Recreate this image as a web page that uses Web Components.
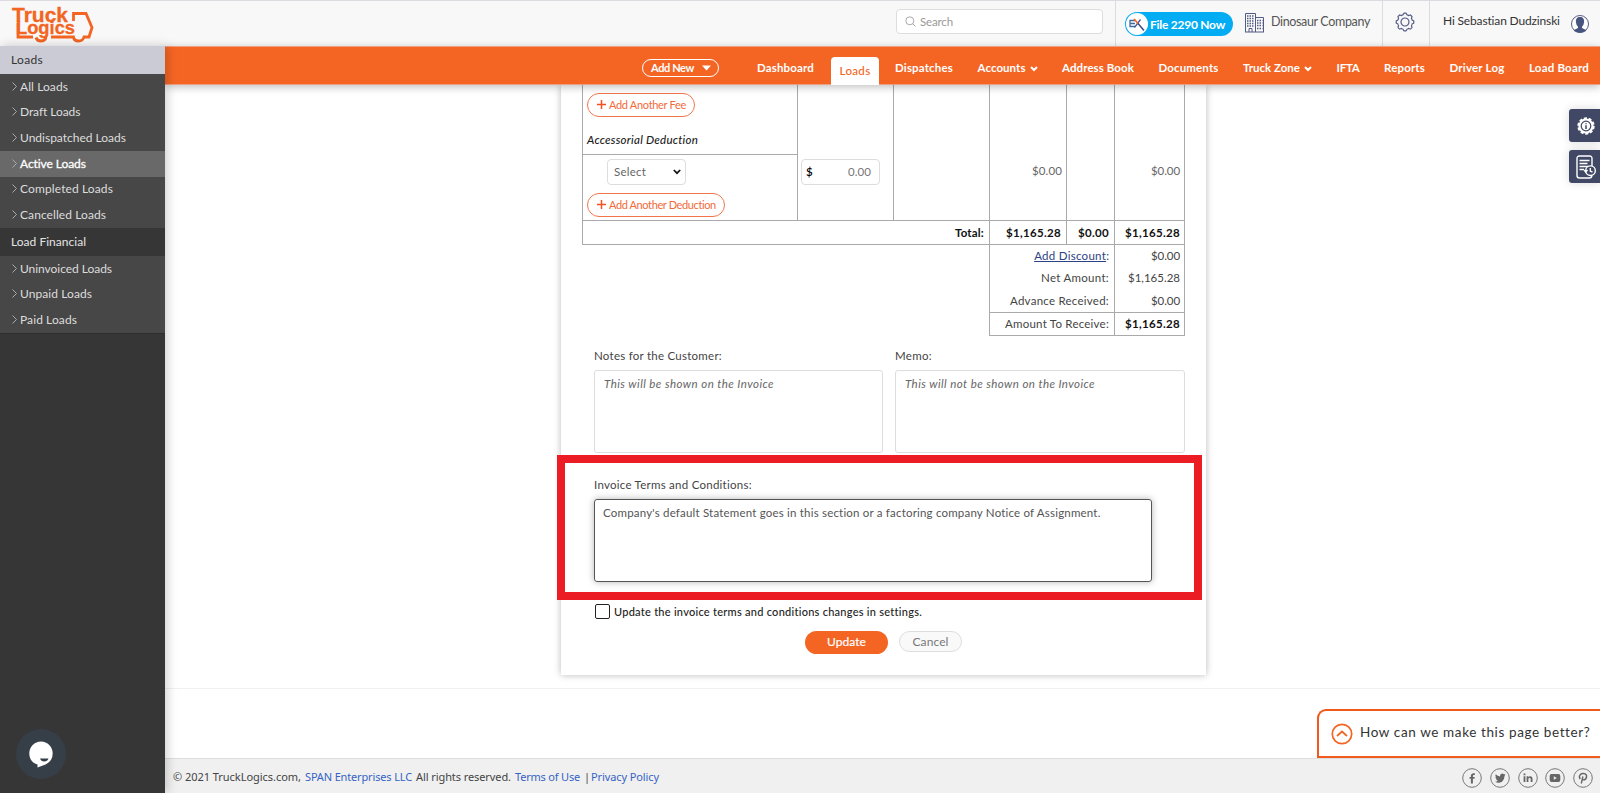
<!DOCTYPE html>
<html lang="en">
<head>
<meta charset="utf-8">
<title>TruckLogics - Invoice</title>
<style>
  body {
    margin: 0;
    font-family: Lato, "Liberation Sans", sans-serif;
    font-size: 12px;
    color: #444;
    background: #fff;
  }
</style>
</head>
<body>
<tl-app></tl-app>

<template id="tl-text">
  <style>
    :host { display: inline-block; white-space: nowrap; }
  </style>
  <slot></slot>
</template>

<template id="tl-app">
  <style>
    :host {
      display: grid;
      grid-template-columns: 165px 1fr;
      grid-template-rows: 46px 747px;
      width: 1600px;
      height: 793px;
      position: relative;
      overflow: hidden;
    }
    tl-header { grid-column: 1 / 3; }
    main {
      display: flex;
      flex-direction: column;
      min-width: 0;
    }
    .content {
      height: 603px;
      display: flex;
      padding-left: 396px;
      border-bottom: 1px solid #f0f0f0;
    }
    .spacer { height: 69px; }
    .side-tools {
      position: absolute;
      right: 0;
      top: 109px;
      display: flex;
      flex-direction: column;
      gap: 8px;
    }
    tl-feedback { position: absolute; right: 0; top: 709px; }
    tl-chat { position: absolute; left: 16px; top: 729px; z-index: 4; }
    .highlight {
      position: absolute;
      left: 557px;
      top: 455px;
      width: 629px;
      height: 129px;
      border: 8px solid #ec1c24;
    }
  </style>
  <tl-header></tl-header>
  <tl-sidebar></tl-sidebar>
  <main>
    <tl-nav></tl-nav>
    <div class="content"><tl-invoice></tl-invoice></div>
    <div class="spacer"></div>
    <tl-footer></tl-footer>
  </main>
  <div class="side-tools">
    <tl-tool>
      <svg width="20" height="20" viewBox="0 0 20 20">
        <circle cx="10" cy="10" r="7.6" fill="#fff"/>
        <circle cx="10" cy="10" r="7.7" fill="none" stroke="#fff" stroke-width="2" stroke-dasharray="3.1 1.74"/>
        <circle cx="10" cy="10" r="4.8" fill="none" stroke="#404865" stroke-width="1.2"/>
        <path d="M10 9.2V13M10 7.2V8.2" stroke="#404865" stroke-width="1.5"/>
      </svg>
    </tl-tool>
    <tl-tool>
      <svg width="20" height="24" viewBox="0 0 20 24" fill="none" stroke="#fff" stroke-width="1.4">
        <path d="M16 11V3.500Q16 1 13.500 1H3.500Q1 1 1 3.500V20.500Q1 23 3.500 23H13.500Q15.500 23 16 20.500"/>
        <path d="M3.500 5.500H13.500M3.500 8.500H11.500M3.500 11.500H13M3.500 14.500H8"/>
        <circle cx="14.500" cy="15.700" r="4.800" fill="#404865"/>
        <path d="M14.300 13V16L16.500 17.200M8.200 15L9.700 17L11.500 15"/>
      </svg>
    </tl-tool>
  </div>
  <div class="highlight"></div>
  <tl-feedback></tl-feedback>
  <tl-chat></tl-chat>
</template>

<template id="tl-header">
  <style>
    :host {
      display: flex;
      box-sizing: border-box;
      height: 46px;
      border-top: 1px solid #dcdce0;
      background: #f8f8f8;
    }
    .logo { margin: 2px 0 0 10px; width: 86px; flex: none; }
    .search {
      box-sizing: border-box;
      width: 207px;
      height: 25px;
      margin: 8px 12px 0 auto;
      padding-left: 8px;
      display: flex;
      align-items: center;
      gap: 4px;
      background: #fff;
      border: 1px solid #ddd;
      border-radius: 4px;
      color: #999;
      font-size: 11.5px;
    }
    .cell { box-sizing: border-box; border-left: 1px solid #dcdce0; display: flex; }
    .company { width: 267px; padding-left: 9px; }
    .pill {
      box-sizing: border-box;
      width: 108px;
      height: 24px;
      margin-top: 11px;
      display: flex;
      align-items: center;
      gap: 2px;
      padding-left: 1px;
      border-radius: 12px;
      background: #04adf3;
      color: #fff;
      font-weight: bold;
    }
    .building { margin: 11px 7px 0 12px; }
    .name { font-size: 12.5px; line-height: 42px; color: #555; }
    .gear { width: 47px; justify-content: center; padding: 11px 3px 0 0; }
    .user { width: 171px; padding-left: 13px; line-height: 40px; color: #333; }
    .avatar { margin: 13px 0 0 10px; }
  </style>
  <svg class="logo" width="86" height="42" viewBox="0 0 86 42">
    <text fill="#f26522" stroke="#f26522" stroke-width=".3" font-family="Liberation Sans" font-weight="bold">
      <tspan x="2" y="18.500" font-size="20" textLength="56" lengthAdjust="spacingAndGlyphs">Truck</tspan>
      <tspan x="6" y="30.500" font-size="18.500" textLength="59" lengthAdjust="spacingAndGlyphs">Logics</tspan>
    </text>
    <path fill="none" stroke="#f26522" stroke-width="2.800" d="M8 20V34H23M63.500 18V10.500H76L82 24.500L79 34H74Q73 38 68.500 38Q64 38 63.500 34H41M26 34.500Q27 38 31 38Q36 38 36 33"/>
  </svg>
  <div class="search">
    <svg width="11" height="11" viewBox="0 0 11 11" fill="none" stroke="#aaa"><circle cx="4.800" cy="4.800" r="4"/><path d="M7.700 7.700L10.500 10.500"/></svg>
    <tl-text w="33">Search</tl-text>
  </div>
  <div class="cell company">
    <div class="pill">
      <svg width="22" height="22" viewBox="0 0 22 22">
        <circle cx="11" cy="11" r="11" fill="#fff"/>
        <path d="M9 7.500H4V13.500H9M4 10.500H9" fill="none" stroke="#3c6aa0" stroke-width="1.300"/>
        <path d="M14.500 6.500L8.500 14.500" stroke="#3c5a9a" stroke-width="1.300"/>
        <path d="M8 6L12.500 11" stroke="#f26522" stroke-width="1.700"/>
        <path d="M12 10.500L18 17.500" stroke="#3c4a80" stroke-width="1.500"/>
      </svg>
      <tl-text w="75">File 2290 Now</tl-text>
    </div>
    <svg class="building" width="19" height="21" viewBox="0 0 19 21" fill="none" stroke="#535b84">
      <path d="M.5 20V1.500H10.500V20M10.500 5.500H18.500V20M0 20H19M4 20V16.500H7V20"/>
      <path stroke-width="1.500" stroke-dasharray="1.500 1" d="M2 4H9.500M2 6.500H9.500M2 9H9.500M2 11.500H9.500M2 14H9.500M12 8.500H17.500M12 11H17.500M12 13.500H17.500M12 16.500H17.500"/>
    </svg>
    <tl-text class="name" w="99">Dinosaur Company</tl-text>
  </div>
  <div class="cell gear">
    <svg width="20" height="20" viewBox="-10 -10 20 20" fill="none" stroke="#535b84" stroke-width="1.200">
      <path id="cog"/>
      <circle r="4"/>
    </svg>
  </div>
  <div class="cell user">
    <tl-text w="117">Hi Sebastian Dudzinski</tl-text>
    <svg class="avatar" width="20" height="20" viewBox="0 0 20 20">
      <circle cx="10" cy="10" r="8.500" fill="#fff" stroke="#535b84"/>
      <path fill="#47547f" d="M10 3C13 3 14.500 5 14 8.500Q13.700 11.500 12 12.800V14L15.500 15.700Q17 16.500 15.500 17.300Q10 20 4.500 17.300Q3 16.500 4.500 15.700L8 14V12.800Q6.300 11.500 6 8.500C5.500 5 7 3 10 3Z"/>
    </svg>
  </div>
</template>

<template id="tl-sidebar">
  <style>
    :host {
      display: block;
      position: relative;
      z-index: 3;
      background: #363636;
      box-shadow: 2px 0 10px rgba(0, 0, 0, 0.2);
    }
    h3 {
      box-sizing: border-box;
      height: 28px;
      margin: 0;
      padding-left: 11px;
      line-height: 28px;
      font-size: 12px;
      font-weight: normal;
      color: #e4e4e4;
    }
    h3.current { background: #cbcbd6; color: #333; }
    .group { background: #474747; }
    .group:last-child { border-bottom: 1px solid #2e2e2e; }
  </style>
  <h3 class="current"><tl-text w="32">Loads</tl-text></h3>
  <div class="group">
    <tl-side-item w="48">All Loads</tl-side-item>
    <tl-side-item w="60">Draft Loads</tl-side-item>
    <tl-side-item w="106">Undispatched Loads</tl-side-item>
    <tl-side-item w="66" active>Active Loads</tl-side-item>
    <tl-side-item w="93">Completed Loads</tl-side-item>
    <tl-side-item w="86">Cancelled Loads</tl-side-item>
  </div>
  <h3><tl-text w="75">Load Financial</tl-text></h3>
  <div class="group">
    <tl-side-item w="92">Uninvoiced Loads</tl-side-item>
    <tl-side-item w="72">Unpaid Loads</tl-side-item>
    <tl-side-item w="57">Paid Loads</tl-side-item>
  </div>
</template>

<template id="tl-side-item">
  <style>
    :host {
      display: flex;
      align-items: center;
      box-sizing: border-box;
      height: 25.67px;
      gap: 3px;
      padding: 0 0 1px 12px;
      color: #ddd;
    }
    :host([active]) { background: #696969; color: #fff; -webkit-text-stroke: 0.3px; }
  </style>
  <svg width="5" height="9" viewBox="0 0 5 9" fill="none" stroke="#aaa"><path d="M.5 .5L4.500 4.500L.5 8.500"/></svg>
  <tl-text><slot></slot></tl-text>
</template>

<template id="tl-nav">
  <style>
    :host {
      display: flex;
      align-items: center;
      box-sizing: border-box;
      height: 39px;
      flex: none;
      position: relative;
      z-index: 2;
      padding-right: 11px;
      justify-content: flex-end;
      background: #f46524;
      border-top: 1px solid #ee9f84;
      border-bottom: 1px solid #ee9f84;
      box-shadow: 0 2px 8px rgba(0, 0, 0, 0.25);
      color: #fff;
      font-size: 11.5px;
      font-weight: bold;
      line-height: 37px;
    }
    .add {
      box-sizing: border-box;
      width: 77px;
      height: 18px;
      margin: 5px 38px 0 0;
      display: flex;
      align-items: center;
      gap: 8px;
      padding-left: 8px;
      border: 1px solid #fff;
      border-radius: 9px;
      font-size: 11px;
      line-height: 16px;
    }
    .item { margin: 4px 0 0 24.5px; white-space: nowrap; }
    .add + .item { margin-left: 0; }
    .item svg { vertical-align: 0; margin-left: 4px; }
    .tab {
      align-self: flex-end;
      height: 28px;
      width: 48px;
      margin: 0 -8.500px -1px 17px;
      line-height: 27px;
      text-align: center;
      background: #fff;
      border-radius: 4px 4px 0 0;
      color: #f26522;
      font-weight: 500;
    }
  </style>
  <div class="add"><tl-text w="43">Add New</tl-text><svg width="9" height="6" viewBox="0 0 9 6"><path d="M0 .5H9L4.500 5.500Z" fill="#fff"/></svg></div>
  <div class="item"><tl-text w="57">Dashboard</tl-text></div>
  <div class="tab"><tl-text w="31">Loads</tl-text></div>
  <div class="item"><tl-text w="58">Dispatches</tl-text></div>
  <div class="item"><tl-text w="48">Accounts</tl-text><svg width="8" height="6" viewBox="0 0 8 6" fill="none" stroke="#fff" stroke-width="2"><path d="M1 1L4 4L7 1"/></svg></div>
  <div class="item"><tl-text w="72">Address Book</tl-text></div>
  <div class="item"><tl-text w="60">Documents</tl-text></div>
  <div class="item"><tl-text w="57">Truck Zone</tl-text><svg width="8" height="6" viewBox="0 0 8 6" fill="none" stroke="#fff" stroke-width="2"><path d="M1 1L4 4L7 1"/></svg></div>
  <div class="item"><tl-text w="23">IFTA</tl-text></div>
  <div class="item"><tl-text w="41">Reports</tl-text></div>
  <div class="item"><tl-text w="55">Driver Log</tl-text></div>
  <div class="item"><tl-text w="60">Load Board</tl-text></div>
</template>

<template id="tl-invoice">
  <style>
    :host {
      display: block;
      box-sizing: border-box;
      width: 645px;
      height: 590px;
      padding-left: 21px;
      background: #fff;
      box-shadow: 0 0 7px rgba(0, 0, 0, 0.28);
      font-size: 11.5px;
    }
    .charges {
      display: grid;
      grid-template-columns: 215px 96px 96px 77px 48px 71px;
      height: 135px;
      width: 603px;
      border-bottom: 1px solid #aaa;
    }
    .charges > div { box-sizing: border-box; border-left: 1px solid #aaa; }
    .charges > .last { border-right: 1px solid #aaa; }
    .fees { padding: 8px 0 0 4px; }
    .subtitle {
      height: 37px;
      margin-left: -4px;
      padding-left: 4px;
      line-height: 45px;
      font-style: italic;
      font-weight: 500;
      color: #222;
      border-bottom: 1px solid #aaa;
    }
    .box {
      box-sizing: border-box;
      height: 26px;
      border: 1px solid #ddd;
      border-radius: 4px;
      display: flex;
      align-items: center;
      justify-content: space-between;
    }
    .select { width: 79px; margin: 4px 0 8px 20px; padding: 0 4px 1px 6px; color: #666; }
    .amount { width: 79px; margin: 74px 0 0 3px; padding: 0 8px 1px 4px; color: #777; }
    .amount b { color: #000; font-weight: 600; }
    .num { padding: 79px 4px 0 0; text-align: right; color: #666; }
    .totals {
      display: grid;
      grid-template-columns: 407px 77px 48px 71px;
      width: 603px;
      height: 23px;
      border-bottom: 1px solid #aaa;
      text-align: right;
      line-height: 23px;
      font-weight: bold;
      color: #111;
    }
    .totals > div { box-sizing: border-box; border-left: 1px solid #aaa; padding-right: 5px; }
    .totals > .last, .summary > div:nth-child(even) { border-right: 1px solid #aaa; }
    .summary {
      display: grid;
      grid-template-columns: 125px 71px;
      grid-template-rows: 22px 23px 22px 23px;
      width: 196px;
      margin-left: 407px;
      border-bottom: 1px solid #aaa;
      text-align: right;
      line-height: 22px;
    }
    .summary > div { box-sizing: border-box; border-left: 1px solid #aaa; padding-right: 5px; }
    .summary > .due { border-top: 1px solid #aaa; }
    .summary > .due:last-child { font-weight: bold; color: #111; }
    .totals > .last, .summary > div:nth-child(even) { padding-right: 4px; }
    .summary .link { color: #2d4284; line-height: 13px; text-decoration: underline; }
    .notes { display: flex; gap: 12px; margin: 12px 0 0 12px; }
    .terms { margin: 24px 0 0 12px; }
    .confirm {
      display: flex;
      align-items: center;
      gap: 4px;
      height: 15px;
      margin: 22px 0 0 13px;
      font-size: 11px;
      font-weight: 500;
      color: #222;
    }
    .check { box-sizing: border-box; width: 15px; height: 15px; border: 1.5px solid #222; border-radius: 2px; background: #fff; }
    .actions { display: flex; gap: 11px; margin: 12px 0 0 223px; font-size: 12px; }
    .btn { box-sizing: border-box; text-align: center; border-radius: 12px; }
    .update { width: 83px; height: 23px; line-height: 22px; background: #f46524; color: #fff; -webkit-text-stroke: 0.2px; }
    .cancel { width: 63px; height: 21px; line-height: 19px; background: #f9f9f9; border: 1px solid #ddd; color: #777; }
  </style>
  <div class="charges">
    <div class="fees">
      <tl-add w="108" text="77">Add Another Fee</tl-add>
      <div class="subtitle"><tl-text w="111">Accessorial Deduction</tl-text></div>
      <div class="box select"><tl-text w="32">Select</tl-text><svg width="8" height="6" viewBox="0 0 8 6" fill="none" stroke="#111" stroke-width="1.700"><path d="M.8 1L4 4.200L7.200 1"/></svg></div>
      <tl-add w="138" text="107">Add Another Deduction</tl-add>
    </div>
    <div><div class="box amount"><b>$</b><tl-text w="23">0.00</tl-text></div></div>
    <div></div>
    <div class="num"><tl-text w="30">$0.00</tl-text></div>
    <div></div>
    <div class="num last"><tl-text w="29">$0.00</tl-text></div>
  </div>
  <div class="totals">
    <div><tl-text w="29">Total:</tl-text></div>
    <div><tl-text w="55">$1,165.28</tl-text></div>
    <div><tl-text w="31">$0.00</tl-text></div>
    <div class="last"><tl-text w="55">$1,165.28</tl-text></div>
  </div>
  <div class="summary">
    <div><tl-text class="link" w="72">Add Discount</tl-text>:</div>
    <div><tl-text w="29">$0.00</tl-text></div>
    <div><tl-text w="68">Net Amount:</tl-text></div>
    <div><tl-text w="52">$1,165.28</tl-text></div>
    <div><tl-text w="99">Advance Received:</tl-text></div>
    <div><tl-text w="29">$0.00</tl-text></div>
    <div class="due"><tl-text w="104">Amount To Receive:</tl-text></div>
    <div class="due"><tl-text w="55">$1,165.28</tl-text></div>
  </div>
  <div class="notes">
    <tl-field width="289" label-w="128" label="Notes for the Customer:" hint><tl-text w="170">This will be shown on the Invoice</tl-text></tl-field>
    <tl-field width="290" label-w="37" label="Memo:" hint><tl-text w="190">This will not be shown on the Invoice</tl-text></tl-field>
  </div>
  <div class="terms">
    <tl-field width="558" label-w="158" label="Invoice Terms and Conditions:" focused><tl-text w="498">Company's default Statement goes in this section or a factoring company Notice of Assignment.</tl-text></tl-field>
  </div>
  <div class="confirm"><div class="check"></div><tl-text w="308">Update the invoice terms and conditions changes in settings.</tl-text></div>
  <div class="actions">
    <div class="btn update"><tl-text w="39">Update</tl-text></div>
    <div class="btn cancel"><tl-text w="36">Cancel</tl-text></div>
  </div>
</template>

<template id="tl-add">
  <style>
    :host {
      box-sizing: border-box;
      display: flex;
      align-items: center;
      gap: 3px;
      height: 24px;
      padding: 0 0 1px 9px;
      border: 1px solid #f3764a;
      border-radius: 12px;
      color: #f26a3a;
      font-size: 11px;
    }
  </style>
  <svg width="9" height="9" viewBox="0 0 9 9" stroke="#f4511e" stroke-width="1.500"><path d="M4.500 0V9M0 4.500H9"/></svg>
  <tl-text><slot></slot></tl-text>
</template>

<template id="tl-field">
  <style>
    :host { display: block; }
    label { display: block; height: 22px; line-height: 15px; color: #444; }
    .area {
      box-sizing: border-box;
      height: 83px;
      padding: 5px 0 0 8px;
      line-height: 15px;
      border: 1px solid #ddd;
      border-radius: 3px;
      color: #555;
    }
    :host([hint]) .area { font-style: italic; padding-left: 9px; color: #666; }
    :host([focused]) .area { border-color: #555; box-shadow: 0 0 7px rgba(0, 0, 0, 0.3); }
  </style>
  <label><tl-text></tl-text></label>
  <div class="area"><slot></slot></div>
</template>

<template id="tl-tool">
  <style>
    :host {
      display: flex;
      align-items: center;
      box-sizing: border-box;
      width: 31px;
      height: 33px;
      padding-left: 7px;
      background: #404865;
      border-radius: 3px 0 0 3px;
      box-shadow: 0 0 10px rgba(0, 0, 0, 0.15);
    }
  </style>
  <slot></slot>
</template>

<template id="tl-feedback">
  <style>
    :host {
      box-sizing: border-box;
      display: flex;
      align-items: center;
      gap: 7px;
      width: 283px;
      height: 49px;
      padding-left: 12px;
      background: #fff;
      border: 2px solid #f15a1f;
      border-right: 0;
      border-top-left-radius: 9px;
      font-size: 13.5px;
      color: #333;
    }
    tl-text { margin-bottom: 3px; }
  </style>
  <svg width="22" height="22" viewBox="0 0 22 22" fill="none" stroke="#f26522" stroke-width="1.700"><circle cx="11" cy="11" r="9.700"/><path d="M6 13L11 8.500L16 13"/></svg>
  <tl-text w="230">How can we make this page better?</tl-text>
</template>

<template id="tl-footer">
  <style>
    :host {
      box-sizing: border-box;
      display: flex;
      align-items: center;
      height: 35px;
      flex: none;
      padding: 0 7px 0 8px;
      gap: 4px;
      border-top: 1px solid #ddd;
      background: #f0f0f0;
      font: 11px "Noto Sans", "Liberation Sans", sans-serif;
      color: #444;
    }
    .link { color: #3564c4; }
    .social { display: flex; gap: 7.700px; margin: 3px 0 0 auto; }
  </style>
  <tl-text w="128">© 2021 TruckLogics.com,</tl-text>
  <tl-text class="link" w="107">SPAN Enterprises LLC</tl-text>
  <tl-text w="95">All rights reserved.</tl-text>
  <tl-text class="link" w="65">Terms of Use</tl-text>
  <tl-text w="3">|</tl-text>
  <tl-text class="link" w="68">Privacy Policy</tl-text>
  <div class="social">
    <tl-social><path d="M10.900 15.500V10.800H12.500L12.700 8.900H10.900V7.900Q10.900 7 11.800 7H12.800V5.200H11.300Q8.900 5.300 8.900 7.600V8.900H7.600V10.800H8.900V15.500Z"/></tl-social>
    <tl-social><path d="M5 13.700Q6.800 13.800 8 12.800Q6.500 12.700 6 11.300H6.900Q5.400 10.700 5.300 9.100L6.200 9.300Q4.800 8.100 5.700 6.200Q7.600 8.300 10 8.400Q9.800 6.200 11.500 5.700Q12.800 5.300 13.900 6.300L15.200 5.800L14.500 6.900L15.500 6.700L14.600 7.800Q14.600 11.500 12 13.700Q8.500 16 5 13.700Z"/></tl-social>
    <tl-social><path d="M5.600 8.300H7.400V14H5.600ZM5.600 5.600H7.400V7.200H5.600ZM8.600 8.300H10.300V9.100Q11 8.100 12.300 8.200Q14.500 8.200 14.500 10.900V14H12.700V11.200Q12.700 9.700 11.600 9.700Q10.400 9.700 10.400 11.200V14H8.600Z"/></tl-social>
    <tl-social><path fill-rule="evenodd" d="M6.500 6H13.500Q15.300 6 15.300 8V12Q15.300 14 13.500 14H6.500Q4.700 14 4.700 12V8Q4.700 6 6.500 6ZM8.800 8.300V11.700L11.800 10Z"/></tl-social>
    <tl-social><path fill="none" stroke="#666" stroke-width="1.400" d="M9.900 8.500L8.300 15.500M7.200 11Q5.500 8.600 7.300 6.600Q9 5 11.500 5.600Q14 6.500 13.500 9Q12.900 11.900 10.700 11.900Q9.500 11.900 9.300 11"/></tl-social>
  </div>
</template>

<template id="tl-social">
  <style>
    :host { display: block; width: 20px; height: 20px; }
    svg { display: block; fill: #666; }
  </style>
  <svg width="20" height="20" viewBox="0 0 20 20"><circle cx="10" cy="10" r="9.300" fill="none" stroke="#777" stroke-width="1"/></svg>
</template>

<template id="tl-chat">
  <style>
    :host {
      display: flex;
      align-items: center;
      justify-content: center;
      width: 50px;
      height: 50px;
      border-radius: 50%;
      background: #363f48;
    }
  </style>
  <svg width="24" height="27" viewBox="0 0 24 27">
    <path fill="#fff" d="M12 .5C18.500 .5 23.700 5.700 23.700 12.300Q23.700 20 16.500 23.500L8.500 26.500V23.500C3 22 .3 17.500 .3 12.300C.3 5.700 5.500 .5 12 .5Z"/>
    <path fill="#363f48" d="M11 17.500H19.500Q18.500 20.500 15.200 20.500Q12 20.500 11 17.500Z"/>
  </svg>
</template>

<script>
  (function () {
    class Base extends HTMLElement {
      connectedCallback() {
        if (this.shadowRoot) return;
        const template = document.getElementById(this.localName);
        this.attachShadow({ mode: "open" }).appendChild(
          template.content.cloneNode(true)
        );
        this.ready();
      }
      ready() {}
    }

    // Spreads its letters so the line takes up `w` pixels.
    class Text extends Base {
      static get observedAttributes() {
        return ["w"];
      }
      ready() {
        this.fit();
      }
      attributeChangedCallback() {
        if (this.shadowRoot) this.fit();
      }
      fit() {
        const w = parseFloat(this.getAttribute("w"));
        if (!w) return;
        const slot = this.querySelector("slot");
        const nodes = slot ? slot.assignedNodes() : this.childNodes;
        const length = Array.from(nodes).map((n) => n.textContent).join("").length;
        this.style.letterSpacing = "0px";
        const natural = this.getBoundingClientRect().width;
        this.style.letterSpacing = (w - natural) / length + "px";
      }
    }

    class SideItem extends Base {
      ready() {
        this.shadowRoot.querySelector("tl-text").setAttribute("w", this.getAttribute("w"));
      }
    }

    class Add extends Base {
      ready() {
        this.style.width = this.getAttribute("w") + "px";
        this.shadowRoot.querySelector("tl-text").setAttribute("w", this.getAttribute("text"));
      }
    }

    class Field extends Base {
      ready() {
        const text = this.shadowRoot.querySelector("tl-text");
        this.style.width = this.getAttribute("width") + "px";
        text.textContent = this.getAttribute("label");
        text.setAttribute("w", this.getAttribute("label-w"));
      }
    }

    class Header extends Base {
      ready() {
        // eight rounded teeth
        let d = "";
        for (let i = 0; i <= 96; i++) {
          const a = (i / 96) * Math.PI * 2;
          const r = 8.1 + Math.max(-0.7, Math.min(0.7, 1.6 * Math.cos(a * 8)));
          d += (i ? "L" : "M") + (r * Math.sin(a)).toFixed(2) + " " + (-r * Math.cos(a)).toFixed(2);
        }
        this.shadowRoot.getElementById("cog").setAttribute("d", d + "Z");
      }
    }

    class Social extends Base {
      ready() {
        const glyph = this.firstElementChild;
        const path = document.createElementNS("http://www.w3.org/2000/svg", "path");
        for (const { name, value } of glyph.attributes) path.setAttribute(name, value);
        this.shadowRoot.querySelector("svg").appendChild(path);
      }
    }

    customElements.define("tl-text", Text);
    customElements.define("tl-side-item", SideItem);
    customElements.define("tl-add", Add);
    customElements.define("tl-field", Field);
    customElements.define("tl-social", Social);
    customElements.define("tl-header", Header);
    for (const name of ["sidebar", "nav", "invoice", "tool", "feedback", "footer", "chat", "app"]) {
      customElements.define("tl-" + name, class extends Base {});
    }
  })();
</script>
</body>
</html>
